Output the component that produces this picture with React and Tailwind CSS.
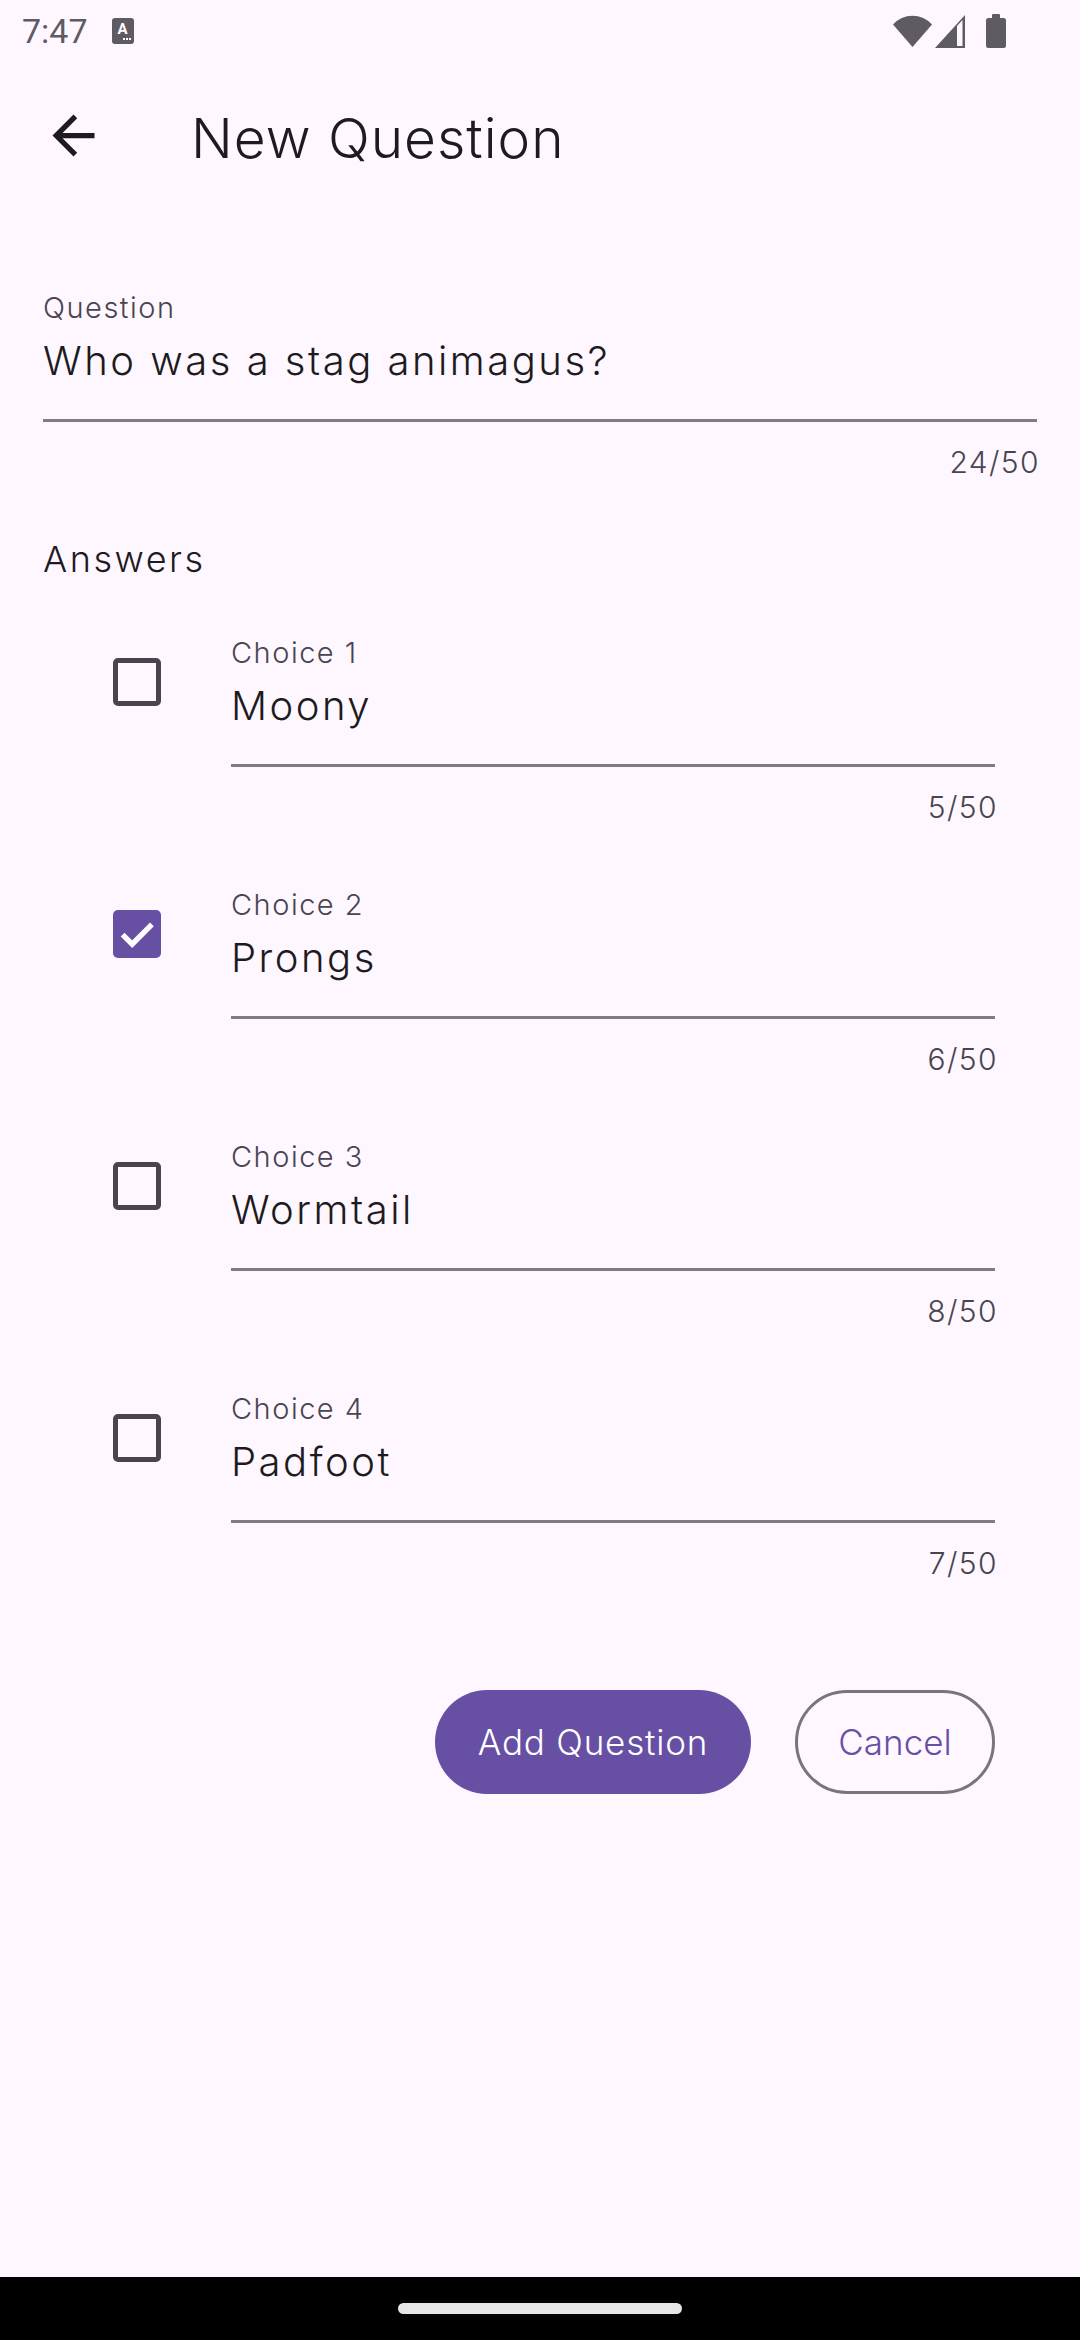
import { useState } from 'react';

// ─── Data ────────────────────────────────────────────────────────────────
const CHOICES = [
  { id: 1, label: 'Choice 1', value: 'Moony', checked: false },
  { id: 2, label: 'Choice 2', value: 'Prongs', checked: true },
  { id: 3, label: 'Choice 3', value: 'Wormtail', checked: false },
  { id: 4, label: 'Choice 4', value: 'Padfoot', checked: false },
];

function StatusBar() {
  return (
    <div className="h-[62px] flex items-center justify-between pl-[22px] pr-[74px]">
      <div className="flex items-center">
        <span className="font-['Roboto',sans-serif] text-[34px] leading-none text-[#5F5B63]">7:47</span>
        <div className="ml-[24px] w-[22px] h-[26px] rounded-[3px] bg-[#5F5B63] flex flex-col items-center justify-center">
          <span className="font-['Roboto',sans-serif] font-bold text-[15px] leading-none text-white">A</span>
          <div className="flex gap-[1px] mt-[1px] self-end mr-[3px]">
            <div className="w-[2px] h-[2px] bg-white" />
            <div className="w-[2px] h-[2px] bg-white" />
            <div className="w-[2px] h-[2px] bg-white" />
          </div>
        </div>
      </div>
      <div className="flex items-center">
        {/* wifi */}
        <svg width="39" height="32" viewBox="0 0 39 32">
          <path d="M0 9.5 A26 26 0 0 1 39 9.5 L19.5 32 Z" fill="#5F5B63" />
        </svg>
        {/* signal */}
        <svg className="ml-[3px]" width="30" height="33" viewBox="0 0 30 33">
          <path d="M0 33 L30 33 L30 0 Z" fill="#5F5B63" />
          <path d="M22 31 L27.5 31 L27.5 5 L22 11 Z" fill="#FEF7FF" />
        </svg>
        {/* battery */}
        <svg className="ml-[21px]" width="20" height="34" viewBox="0 0 20 34">
          <rect x="6" y="0" width="8" height="5" rx="1" fill="#5F5B63" />
          <rect x="0" y="4" width="20" height="30" rx="2.5" fill="#5F5B63" />
        </svg>
      </div>
    </div>
  );
}

function TopBar() {
  return (
    <div className="h-[152px] flex items-center">
      <button className="ml-[42px] mb-[6px] w-[63px] h-[63px] flex items-center justify-center">
        <svg width="63" height="63" viewBox="0 0 24 24">
          <path d="M20 11H7.83l5.59-5.59L12 4l-8 8 8 8 1.41-1.41L7.83 13H20v-2z" fill="#1D1B20" />
        </svg>
      </button>
      <h1 className="ml-[86px] text-[55px] font-light tracking-[1px] leading-none text-[#1D1B20]">New Question</h1>
    </div>
  );
}

// label / value / underline / counter, like the M3 text field
function Field({ label, value, max = 50 }) {
  return (
    <div className="flex flex-col">
      <div className="text-[29px] leading-[40px] font-light tracking-[1.5px] text-[#49454F]">{label}</div>
      <div className="mt-[5px] text-[40px] leading-[56px] font-light tracking-[2.5px] text-[#1D1B20]">{value}</div>
      <div className="mt-[30px] h-[3px] bg-[#807C85]" />
      <div className="mt-[20px] -mr-[3px] text-[30px] leading-[40px] font-light tracking-[1.4px] text-right text-[#49454F]">
        {value.length}/{max}
      </div>
    </div>
  );
}

function Checkbox({ checked }) {
  if (checked) {
    return (
      <div className="w-[48px] h-[48px] rounded-[5px] bg-[#6750A4] flex items-center justify-center">
        <svg width="48" height="48" viewBox="0 0 18 18">
          <path d="M3.6 9.2 L7.2 12.8 L14.6 5.4" stroke="#fff" strokeWidth="2" fill="none" />
        </svg>
      </div>
    );
  }
  return <div className="w-[48px] h-[48px] rounded-[5px] border-[5px] border-[#49454F]" />;
}

export default function App() {
  const [choices] = useState(CHOICES);

  return (
    <div className="w-[1080px] h-[2340px] bg-[#FEF7FF] flex flex-col font-['Inter',sans-serif]">
      <StatusBar />
      <TopBar />

      <div className="flex-1 flex flex-col">
        <div className="mt-[74px] pl-[43px] pr-[43px]">
          <Field label="Question" value="Who was a stag animagus?" />
        </div>

        <div className="mt-[53px] pl-[43px] text-[36px] leading-[48px] font-light tracking-[2.5px] text-[#1D1B20]">Answers</div>

        <div className="mt-[50px] flex flex-col gap-[58px] pl-[113px] pr-[85px]">
          {choices.map((c) => (
            <div key={c.id} className="flex items-start">
              <div className="mt-[25px]">
                <Checkbox checked={c.checked} />
              </div>
              <div className="ml-[70px] flex-1">
                <Field label={c.label} value={c.value} />
              </div>
            </div>
          ))}
        </div>

        <div className="mt-[107px] flex justify-end gap-[44px] pr-[85px]">
          <button className="w-[316px] h-[104px] rounded-full bg-[#6750A4] text-white text-[35px] font-light tracking-[0.8px]">
            Add Question
          </button>
          <button className="w-[200px] h-[104px] rounded-full border-[3px] border-[#79747E] text-[#6750A4] text-[35px] font-light">
            Cancel
          </button>
        </div>
      </div>

      <div className="h-[63px] bg-black flex items-center justify-center">
        <div className="w-[284px] h-[11px] rounded-full bg-[#E6E6E6]" />
      </div>
    </div>
  );
}
